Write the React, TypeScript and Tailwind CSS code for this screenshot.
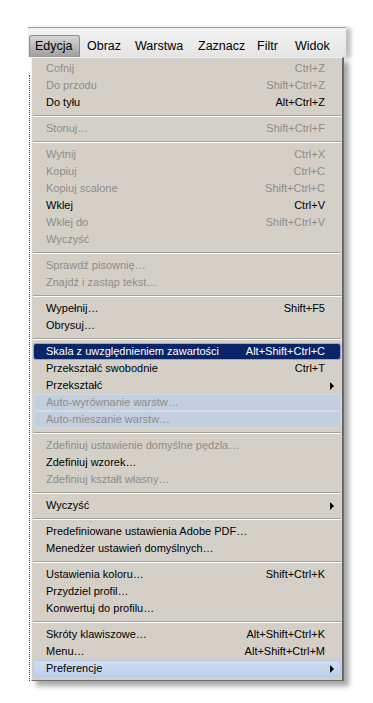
type Item = {
  label: string;
  shortcut?: string;
  disabled?: boolean;
  submenu?: boolean;
  state?: "selected" | "tint" | "hover";
};

const groups: Item[][] = [
  [
    { label: "Cofnij", shortcut: "Ctrl+Z", disabled: true },
    { label: "Do przodu", shortcut: "Shift+Ctrl+Z", disabled: true },
    { label: "Do tyłu", shortcut: "Alt+Ctrl+Z" },
  ],
  [{ label: "Stonuj…", shortcut: "Shift+Ctrl+F", disabled: true }],
  [
    { label: "Wytnij", shortcut: "Ctrl+X", disabled: true },
    { label: "Kopiuj", shortcut: "Ctrl+C", disabled: true },
    { label: "Kopiuj scalone", shortcut: "Shift+Ctrl+C", disabled: true },
    { label: "Wklej", shortcut: "Ctrl+V" },
    { label: "Wklej do", shortcut: "Shift+Ctrl+V", disabled: true },
    { label: "Wyczyść", disabled: true },
  ],
  [
    { label: "Sprawdź pisownię…", disabled: true },
    { label: "Znajdź i zastąp tekst…", disabled: true },
  ],
  [
    { label: "Wypełnij…", shortcut: "Shift+F5" },
    { label: "Obrysuj…" },
  ],
  [
    { label: "Skala z uwzględnieniem zawartości", shortcut: "Alt+Shift+Ctrl+C", state: "selected" },
    { label: "Przekształć swobodnie", shortcut: "Ctrl+T" },
    { label: "Przekształć", submenu: true },
    { label: "Auto-wyrównanie warstw…", disabled: true, state: "tint" },
    { label: "Auto-mieszanie warstw…", disabled: true, state: "tint" },
  ],
  [
    { label: "Zdefiniuj ustawienie domyślne pędzla…", disabled: true },
    { label: "Zdefiniuj wzorek…" },
    { label: "Zdefiniuj kształt własny…", disabled: true },
  ],
  [{ label: "Wyczyść", submenu: true }],
  [
    { label: "Predefiniowane ustawienia Adobe PDF…" },
    { label: "Menedżer ustawień domyślnych…" },
  ],
  [
    { label: "Ustawienia koloru…", shortcut: "Shift+Ctrl+K" },
    { label: "Przydziel profil…" },
    { label: "Konwertuj do profilu…" },
  ],
  [
    { label: "Skróty klawiszowe…", shortcut: "Alt+Shift+Ctrl+K" },
    { label: "Menu…", shortcut: "Alt+Shift+Ctrl+M" },
    { label: "Preferencje", submenu: true, state: "hover" },
  ],
];

const menuBar = [
  { label: "Obraz", w: "w-[48px]" },
  { label: "Warstwa", w: "w-[63px]" },
  { label: "Zaznacz", w: "w-[59px]" },
  { label: "Filtr", w: "w-[38px]" },
  { label: "Widok", w: "w-[40px]" },
];

function Row({ item }: { item: Item }) {
  let box = "border border-transparent";
  let text = item.disabled ? "text-[#8e8d8a]" : "text-black";
  if (item.state === "selected") {
    box = "border border-[#8ea6d2] bg-[#0a246a] rounded-[3px]";
    text = "text-white";
  } else if (item.state === "tint") {
    box = "border border-[#d0d9e5] bg-[#c3cfde] rounded-[3px]";
  } else if (item.state === "hover") {
    box = "border border-[#b7c9e4] bg-gradient-to-b from-[#cfddf1] to-[#bdd0ec] rounded-[3px]";
  }

  return (
    <div className={`mx-px flex h-[17px] items-center pl-[12px] pr-[15px] ${box} ${text}`}>
      <span className="flex-1 whitespace-nowrap">{item.label}</span>
      {item.shortcut && <span className="whitespace-nowrap">{item.shortcut}</span>}
      {item.submenu && (
        <span className="mr-[-9px] h-0 w-0 border-y-[4px] border-l-[4px] border-y-transparent border-l-black" />
      )}
    </div>
  );
}

function Separator() {
  return (
    <div className="mx-px py-[3px] pt-[4px]">
      <div className="border-t border-[#a4a19b]" />
      <div className="border-t border-white" />
    </div>
  );
}

export default function App() {
  return (
    <div
      className="min-h-screen bg-white pt-[27px] pl-[28px]"
      style={{ fontFamily: '"Liberation Sans", Arial, sans-serif' }}
    >
      <div className="w-[318px]">
        {/* menu bar */}
        <div className="flex h-[30px] items-end border-t border-[#9c9c9c] bg-gradient-to-b from-[#f3f3f3] to-[#e4e4e4] pl-px text-[12.5px] text-black shadow-[5px_1px_4px_rgba(0,0,0,0.25)]">
          <div className="flex h-[22px] w-[51px] items-center rounded-t-[3px] border border-b-0 border-[#8d8d8d] bg-gradient-to-b from-[#d6d6d6] to-[#9d9d9d] pl-[5px]">
            Edycja
          </div>
          <div className="ml-[7px] flex h-[22px] items-center">
            {menuBar.map((m) => (
              <span key={m.label} className={m.w}>
                {m.label}
              </span>
            ))}
          </div>
        </div>

        {/* dropdown */}
        <div className="flex">
          <div className="w-[3px] flex-none">
            <div className="ml-px mt-[18px] h-[606px] border-l border-dotted border-[#444]" />
          </div>
          <div className="w-[313px] border-l border-t border-b border-r-2 border-l-[#f4f3f0] border-t-[#f4f3f0] border-b-[#707070] border-r-[#6a6a6a] bg-[#d4d0c8] pt-[2px] pb-px text-[11px] shadow-[5px_5px_5px_rgba(0,0,0,0.35)]">
            {groups.map((g, i) => (
              <div key={i}>
                {i > 0 && <Separator />}
                {g.map((item, j) => (
                  <Row key={j} item={item} />
                ))}
              </div>
            ))}
          </div>
        </div>
      </div>
    </div>
  );
}
